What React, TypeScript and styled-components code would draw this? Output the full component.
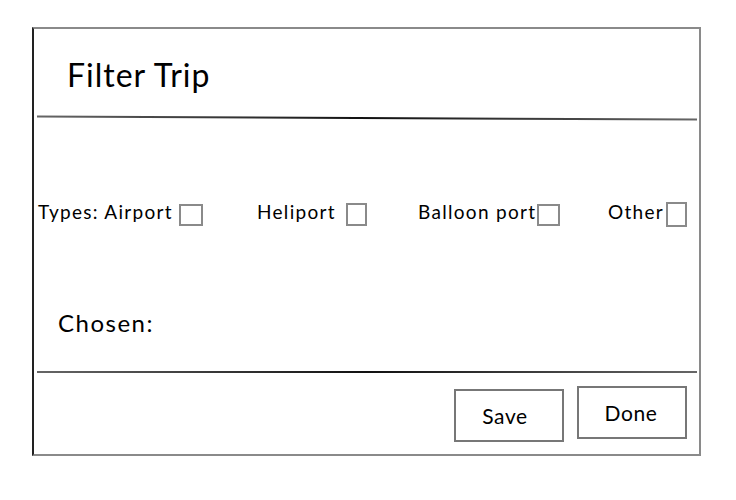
import styled, { createGlobalStyle } from "styled-components";

const GlobalStyle = createGlobalStyle`
  html, body {
    margin: 0;
    padding: 0;
    background: #ffffff;
  }
  body {
    font-family: Lato, "Open Sans", "Liberation Sans", sans-serif;
    color: #000;
  }
`;

const Frame = styled.div`
  box-sizing: border-box;
  margin: 27px 0 0 32px;
  width: 669px;
  height: 429px;
  border: 2px solid #8a8a8a;
  border-left-color: #222;
  display: flex;
  flex-direction: column;
`;

const Header = styled.div`
  height: 88px;
  display: flex;
  align-items: center;
  padding: 4px 0 0 33px;
  box-sizing: border-box;
`;

const Title = styled.h1`
  margin: 0;
  font-size: 32px;
  font-weight: 400;
  letter-spacing: 1px;
  line-height: 1;
`;

const Divider = styled.hr<{ tilt?: number }>`
  border: 0;
  height: 2px;
  margin: 0 2px 0 3px;
  background: linear-gradient(90deg, #666, #111 50%, #666);
  transform: rotate(${(p) => p.tilt ?? 0}deg);
`;

const Body = styled.div`
  height: 252px;
  display: flex;
  flex-direction: column;
`;

const TypesRow = styled.div`
  display: grid;
  grid-template-columns: 219px 161px 190px auto;
  align-items: center;
  margin-top: 77px;
  padding-left: 4px;
`;

const Option = styled.label<{ gap: number }>`
  display: flex;
  align-items: center;
  gap: ${(p) => p.gap}px;
  font-size: 19px;
  letter-spacing: 1.3px;
`;

const Box = styled.span<{ w: number; h: number }>`
  display: inline-block;
  box-sizing: border-box;
  width: ${(p) => p.w}px;
  height: ${(p) => p.h}px;
  border: 2px solid #8a8a8a;
  margin-top: 6px;
`;

const Chosen = styled.div`
  margin: 84px 0 0 24px;
  font-size: 24px;
  letter-spacing: 1.5px;
  line-height: 1;
`;

const Footer = styled.div`
  flex: 1;
  display: flex;
  justify-content: flex-end;
  align-items: flex-start;
  gap: 13px;
  padding-right: 12px;
`;

const Button = styled.button<{ top: number; shift: number }>`
  box-sizing: border-box;
  width: 110px;
  height: 53px;
  margin-top: ${(p) => p.top}px;
  background: #fff;
  border: 2px solid #777;
  font-family: Lato, "Open Sans", "Liberation Sans", sans-serif;
  font-size: 21px;
  letter-spacing: 0.6px;
  color: #000;
  padding: 0 ${(p) => p.shift}px 0 0;
`;

const options = [
  { label: "Types: Airport", gap: 6, w: 24, h: 22 },
  { label: "Heliport", gap: 10, w: 21, h: 23 },
  { label: "Balloon port", gap: 1, w: 23, h: 22 },
  { label: "Other", gap: 2, w: 21, h: 25 },
];

export default function App() {
  return (
    <>
      <GlobalStyle />
      <Frame>
        <Header>
          <Title>Filter Trip</Title>
        </Header>
        <Divider tilt={0.26} />
        <Body>
          <TypesRow>
            {options.map((opt) => (
              <Option key={opt.label} gap={opt.gap}>
                {opt.label}
                <Box w={opt.w} h={opt.h} />
              </Option>
            ))}
          </TypesRow>
          <Chosen>Chosen:</Chosen>
        </Body>
        <Divider />
        <Footer>
          <Button top={16} shift={8}>Save</Button>
          <Button top={13} shift={2}>Done</Button>
        </Footer>
      </Frame>
    </>
  );
}
